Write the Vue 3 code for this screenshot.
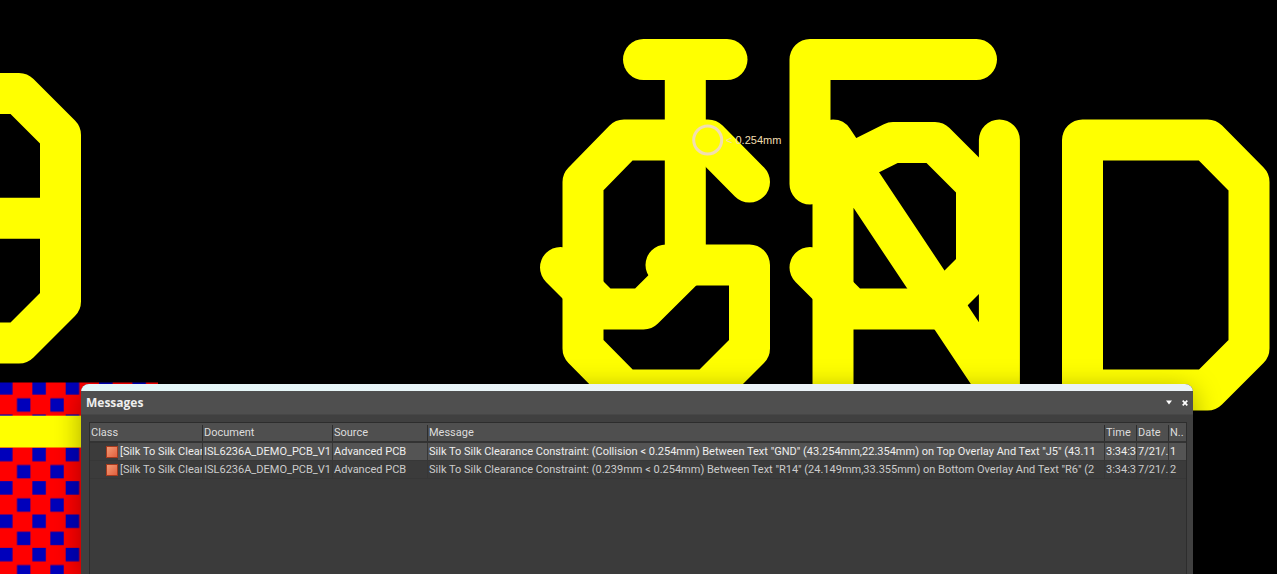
<template>
  <main class="workspace">
    <svg class="board" width="1277" height="574" viewBox="0 0 1277 574" role="img" aria-label="PCB layout">
      <defs>
        <pattern id="hatch" x="-1" y="447.8" width="33.35" height="33.35" patternUnits="userSpaceOnUse">
          <rect width="33.35" height="33.35" fill="#f00" />
          <rect width="13.5" height="13.5" fill="#00b" />
          <rect x="18" y="17.2" width="13.4" height="13.4" fill="#00b" />
        </pattern>
      </defs>

      <!-- copper area with a silk line across it -->
      <rect x="0" y="382.5" width="158" height="192" fill="url(#hatch)" />
      <rect x="0" y="415.7" width="158" height="31.8" fill="#ff0" />

      <g class="silk">
        <path v-for="s in strokes" :key="s" :d="s" />
      </g>

      <!-- violation marker -->
      <circle class="marker" cx="707.7" cy="140" r="14" />
      <text class="markerText" x="726" y="144">&lt; 0.254mm</text>
    </svg>

    <section class="messages" aria-labelledby="messagesTitle">
      <div class="strip"></div>
      <header class="titleBar">
        <h2 id="messagesTitle">Messages</h2>
        <button type="button" aria-label="Panel menu">
          <svg width="6" height="5" viewBox="0 0 6 5"><path d="M0 0.5h6L3 4.5z" fill="#fff" /></svg>
        </button>
        <button type="button" aria-label="Close" @click="selected = null">
          <svg width="6" height="6" viewBox="0 0 6 6"><path d="M0.7 0.7l4.6 4.6M5.3 0.7L0.7 5.3" stroke="#fff" stroke-width="1.7" /></svg>
        </button>
      </header>

      <div class="list">
        <table>
          <colgroup>
            <col v-for="c in columns" :key="c.key" :class="'col-' + c.key" />
          </colgroup>
          <thead>
            <tr>
              <th v-for="c in columns" :key="c.key" scope="col"><span>{{ c.label }}</span></th>
            </tr>
          </thead>
          <tbody>
            <tr v-for="m in messages" :key="m.no" :class="{ selected: m.no === selected }" @click="selected = m.no">
              <td v-for="c in columns" :key="c.key" :class="'cell-' + c.key">
                <div v-if="c.key === 'kind'" class="kind">
                  <i class="mark"></i>
                  <span>{{ m.kind }}</span>
                </div>
                <template v-else>{{ m[c.key] }}</template>
              </td>
            </tr>
          </tbody>
        </table>
      </div>
    </section>
  </main>
</template>

<script setup>
import { ref } from "vue";

// --- Silkscreen strokes, one path per pen stroke ---
const strokes = [
  // left designator
  "M-30 93.5H19L60.5 135V301.5L19 343H-30",
  "M-30 218.3H60.5",
  // J
  "M643.5 59.5H727",
  "M685.3 59.5V267.5L643.5 309H602L560.5 267.5",
  // 5
  "M976.5 59.5H810V184L893 142.5H935L976.5 184V267.5L935 309H851.5L810 267.5",
  // G
  "M749.5 182L708 140H624L583 182V348.5L624 390H708L749.5 348.5V265H666",
  // N
  "M833 390V140L999.4 390V140",
  // D
  "M1082.5 140H1207.5L1249 182V348.5L1207.5 390H1082.5Z"
];

// --- Messages list ---
const columns = [
  { key: "kind", label: "Class" },
  { key: "document", label: "Document" },
  { key: "source", label: "Source" },
  { key: "message", label: "Message" },
  { key: "time", label: "Time" },
  { key: "date", label: "Date" },
  { key: "no", label: "N.." }
];

const messages = [
  {
    kind: "[Silk To Silk Clear",
    document: "ISL6236A_DEMO_PCB_V1",
    source: "Advanced PCB",
    message: 'Silk To Silk Clearance Constraint: (Collision < 0.254mm) Between Text "GND" (43.254mm,22.354mm) on Top Overlay And Text "J5" (43.11',
    time: "3:34:3",
    date: "7/21/.",
    no: 1
  },
  {
    kind: "[Silk To Silk Clear",
    document: "ISL6236A_DEMO_PCB_V1",
    source: "Advanced PCB",
    message: 'Silk To Silk Clearance Constraint: (0.239mm < 0.254mm) Between Text "R14" (24.149mm,33.355mm) on Bottom Overlay And Text "R6" (2',
    time: "3:34:3",
    date: "7/21/.",
    no: 2
  }
];

const selected = ref(1);
</script>

<style>
body { background: #000; }
</style>

<style scoped>
.workspace { display: grid; min-height: 100vh; overflow: hidden; background: #000; font-family: "Open Sans", "Noto Sans", sans-serif; font-size: 11px; }
.board { grid-area: 1 / 1; display: block; }
.silk path { fill: none; stroke: #ff0; stroke-width: 41; stroke-linecap: round; stroke-linejoin: round; }
.marker { fill: none; stroke: #f2deb0; stroke-width: 3; }
.markerText { font: 11px "Liberation Sans", Arial, sans-serif; fill: #f2deb0; }

.messages { grid-area: 1 / 1; display: flex; flex-direction: column; min-width: 0; margin: 384px 84px 0 81px; background: #404040; border-radius: 8px 8px 0 0; overflow: hidden; box-shadow: 0 6px 28px rgba(0, 0, 0, 0.35); }
.strip { height: 7px; background: linear-gradient(90deg, #e4f8f9, #ebf3f8 50%); }
.titleBar { display: flex; align-items: center; gap: 10px; height: 23px; padding: 0 5px; background: #4f4f4f; border-bottom: 1px solid #474747; }
.titleBar h2 { flex: 1; margin: 0; font-size: 12px; line-height: 16px; font-weight: 700; color: #eee; }
.titleBar button { display: flex; padding: 0; border: 0; background: none; cursor: pointer; }

.list { flex: 1; margin: 7px 6px 0 8px; border: 1px solid #2d2d2d; border-bottom: 0; background: #3b3b3b; }
table { width: 100%; table-layout: fixed; border-collapse: separate; border-spacing: 0; font-family: Roboto, "Open Sans", sans-serif; font-size: 11px; }
.col-kind { width: 112px; }
.col-document { width: 130px; }
.col-source { width: 95px; }
.col-time { width: 32px; }
.col-date { width: 32px; }
.col-no { width: 18px; }
th { height: 17px; padding: 1px 0 0; background: #4f4f4f; border-bottom: 2px solid #333; font-weight: 400; text-align: left; color: #ddd; white-space: nowrap; }
th span { display: block; padding-left: 1px; line-height: 16px; }
th + th span { border-left: 1px solid #2d2d2d; }
td { height: 17px; padding: 0 0 0 1px; line-height: 17px; color: #ccc; white-space: nowrap; overflow: hidden; border-bottom: 1px solid #373737; }
td + td { border-left: 1px solid #373737; }
.selected td { background: #545454; color: #eee; }
.selected .cell-kind { background: linear-gradient(90deg, #3b3b3b 28px, #545454 28px); }
.kind { display: flex; align-items: center; gap: 2px; padding-left: 15px; }
.mark { flex: none; box-sizing: border-box; width: 12px; height: 12px; border: 1px solid #a63a1e; background: linear-gradient(135deg, #f29a74, #e2603e); }
</style>
